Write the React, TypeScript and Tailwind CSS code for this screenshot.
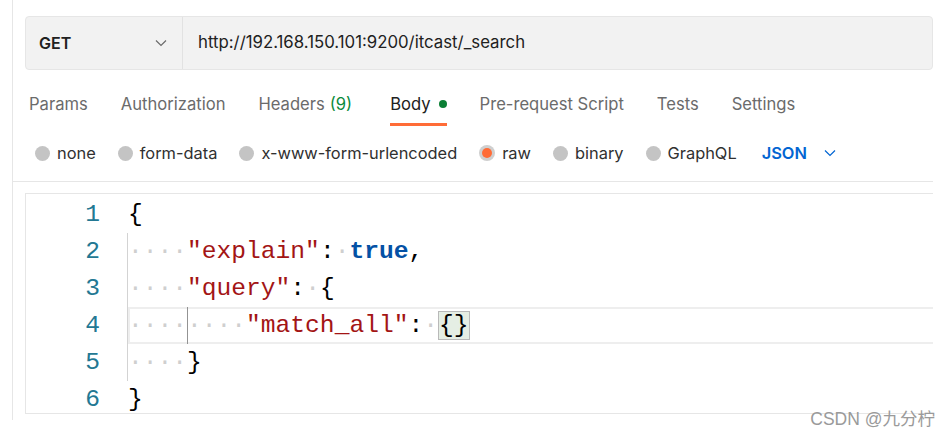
import React from "react";

const Chevron = ({ className }: { className?: string }) => (
  <svg viewBox="0 0 12 8" className={className} fill="none" stroke="currentColor" strokeWidth="1.2">
    <polyline points="1,1.5 6,6.5 11,1.5" />
  </svg>
);

const tabs = [
  { name: "Params" },
  { name: "Authorization" },
  { name: "Headers", count: "(9)" },
  { name: "Body", active: true },
  { name: "Pre-request Script" },
  { name: "Tests" },
  { name: "Settings" },
];

const bodyTypes = ["none", "form-data", "x-www-form-urlencoded", "raw", "binary", "GraphQL"];

// whitespace dots like the editor renders them
const Ws = ({ n }: { n: number }) => <span className="text-[#cfcfcf]">{"·".repeat(n)}</span>;
const Str = ({ children }: { children: React.ReactNode }) => <span className="text-[#a31515]">{children}</span>;

const CodeLine = ({
  num,
  guide,
  active,
  children,
}: {
  num: number;
  guide?: boolean;
  active?: boolean;
  children: React.ReactNode;
}) => (
  <div className="flex h-[37px]">
    <div className="w-[74px] shrink-0 text-right text-[#237893] leading-[37px]">{num}</div>
    <div className="w-[28px] shrink-0" />
    <div className="relative flex-1 leading-[37px] whitespace-pre text-black">
      {guide && <div className="absolute left-[-1px] top-0 bottom-0 w-px bg-[#d3d3d3]" />}
      {active && (
        <>
          <div className="absolute inset-0 border-2 border-r-0 border-[#eeeeee]" />
          <div className="absolute left-[59px] top-0 bottom-0 w-px bg-[#939393]" />
        </>
      )}
      <span className="relative">{children}</span>
    </div>
  </div>
);

export default function App() {
  return (
    <div className="relative w-[951px] h-[435px] overflow-hidden bg-white font-['Inter',sans-serif]">
      <div className="ml-[12px] w-[921px] h-[420px] border-l border-[#e6e6e6]">
        {/* url bar */}
        <div className="pl-[12px] pt-[16px]">
          <div className="flex h-[54px] rounded-[4px] border border-[#e6e6e6] bg-[#f2f2f2]">
            <div className="flex w-[157px] items-center justify-between border-r border-[#e2e2e2] pl-[13px] pr-[15px]">
              <span className="text-[16px] font-semibold text-[#212121]">GET</span>
              <Chevron className="w-[12px] h-[8px] text-[#6b6b6b]" />
            </div>
            <div className="flex items-center pl-[15px] text-[16.8px] text-[#212121]">
              http://192.168.150.101:9200/itcast/_search
            </div>
          </div>
        </div>

        {/* tabs */}
        <div className="mt-[22px] flex gap-[33px] pl-[16px]">
          {tabs.map((t) => (
            <div
              key={t.name}
              className={`flex items-center gap-[8px] pb-[7px] text-[16.6px] leading-[24px] border-b-[3px] ${
                t.active ? "ml-[5px] border-[#ff6c37] text-[#212121]" : "border-transparent text-[#6b6b6b]"
              }`}
            >
              <span>
                {t.name}
                {t.count && <span className="ml-[5px] text-[#0a8a3c]">{t.count}</span>}
              </span>
              {t.active && <span className="w-[8px] h-[8px] rounded-full bg-[#0b7f35]" />}
            </div>
          ))}
        </div>

        {/* body type */}
        <div className="mt-[15px] flex items-center gap-[22px] border-b border-[#e6e6e6] pb-[16px] pl-[22px]">
          {bodyTypes.map((b) => (
            <div key={b} className="flex items-center gap-[7px] text-[16.4px] leading-[24px] text-[#303030]">
              {b === "raw" ? (
                <span className="flex w-[16px] h-[16px] items-center justify-center rounded-full bg-[#cfcfcf]">
                  <span className="w-[10px] h-[10px] rounded-full bg-[#ff6c37]" />
                </span>
              ) : (
                <span className="w-[15px] h-[15px] rounded-full bg-[#c4c4c4]" />
              )}
              <span>{b}</span>
            </div>
          ))}
          <div className="ml-[3px] flex items-center gap-[17px] text-[16.4px] leading-[24px] font-semibold text-[#0265d2]">
            <span>JSON</span>
            <Chevron className="w-[12px] h-[8px]" />
          </div>
        </div>

        {/* editor */}
        <div className="ml-[12px] mt-[11px] h-[221px] overflow-hidden border-l border-t border-b border-[#e6e6e6] pt-[2px] font-['Liberation_Mono',monospace] text-[24.6px]">
          <CodeLine num={1}>{"{"}</CodeLine>
          <CodeLine num={2} guide>
            <Ws n={4} />
            <Str>"explain"</Str>:<Ws n={1} />
            <span className="font-bold text-[#0451a5]">true</span>,
          </CodeLine>
          <CodeLine num={3} guide>
            <Ws n={4} />
            <Str>"query"</Str>:<Ws n={1} />
            {"{"}
          </CodeLine>
          <CodeLine num={4} guide active>
            <Ws n={8} />
            <Str>"match_all"</Str>:<Ws n={1} />
            <span className="border border-[#b9b9b9] bg-[#e5eee4]">{"{}"}</span>
          </CodeLine>
          <CodeLine num={5} guide>
            <Ws n={4} />
            {"}"}
          </CodeLine>
          <CodeLine num={6}>{"}"}</CodeLine>
        </div>
      </div>

      <div className="absolute right-[16px] top-[406px] text-[17.5px] text-[#9a9a9a] font-['Liberation_Sans','Noto_Sans_CJK_SC',sans-serif]">
        CSDN @九分柠
      </div>
    </div>
  );
}
